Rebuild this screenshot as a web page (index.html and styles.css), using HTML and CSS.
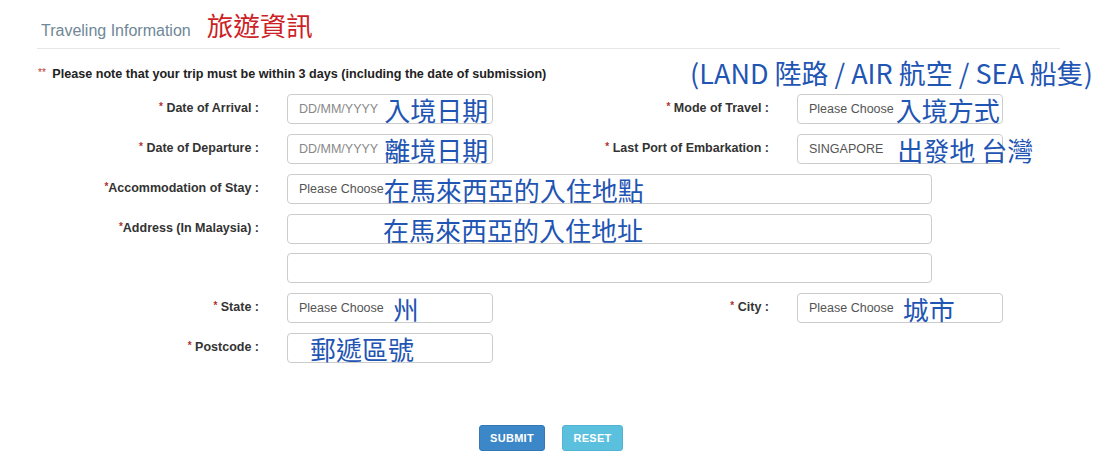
FILE: index.html
```html
<!DOCTYPE html>
<html lang="en">
<head>
<meta charset="utf-8">
<title>Traveling Information</title>
<link rel="stylesheet" href="styles.css">
</head>
<body>
<div class="page">
  <div class="header">
    <span class="title">Traveling Information</span>
    <span class="title-zh">旅遊資訊</span>
  </div>

  <div class="note-row">
    <div class="note"><span class="stars">**</span> Please note that your trip must be within 3 days (including the date of submission)</div>
    <div class="annot-mode">(LAND 陸路 / AIR 航空 / SEA 船隻)</div>
  </div>

  <div class="form">
    <div class="row">
      <div class="field">
        <label class="label"><span class="req">*</span> Date of Arrival :</label>
        <div class="input"><span class="ph">DD/MM/YYYY</span><span class="zh zh-date">入境日期</span></div>
      </div>
      <div class="field">
        <label class="label"><span class="req">*</span> Mode of Travel :</label>
        <div class="input"><span class="val">Please Choose</span><span class="zh zh-mode">入境方式</span></div>
      </div>
    </div>

    <div class="row">
      <div class="field">
        <label class="label"><span class="req">*</span> Date of Departure :</label>
        <div class="input"><span class="ph">DD/MM/YYYY</span><span class="zh zh-date">離境日期</span></div>
      </div>
      <div class="field">
        <label class="label"><span class="req">*</span> Last Port of Embarkation :</label>
        <div class="input"><span class="val">SINGAPORE</span><span class="zh zh-port">出發地 台灣</span></div>
      </div>
    </div>

    <div class="row">
      <div class="field">
        <label class="label"><span class="req">*</span>Accommodation of Stay :</label>
        <div class="input wide"><span class="val">Please Choose</span><span class="zh zh-acc">在馬來西亞的入住地點</span></div>
      </div>
    </div>

    <div class="row">
      <div class="field">
        <label class="label"><span class="req">*</span>Address (In Malaysia) :</label>
        <div class="input wide"><span class="zh zh-addr">在馬來西亞的入住地址</span></div>
      </div>
    </div>

    <div class="row row-tight">
      <div class="field">
        <span class="label"></span>
        <div class="input wide"></div>
      </div>
    </div>

    <div class="row">
      <div class="field">
        <label class="label"><span class="req">*</span> State :</label>
        <div class="input"><span class="val">Please Choose</span><span class="zh zh-state">州</span></div>
      </div>
      <div class="field">
        <label class="label"><span class="req">*</span> City :</label>
        <div class="input"><span class="val">Please Choose</span><span class="zh zh-city">城市</span></div>
      </div>
    </div>

    <div class="row">
      <div class="field">
        <label class="label"><span class="req">*</span> Postcode :</label>
        <div class="input"><span class="zh zh-post">郵遞區號</span></div>
      </div>
    </div>
  </div>

  <div class="actions">
    <button class="btn btn-submit" type="button">SUBMIT</button>
    <button class="btn btn-reset" type="button">RESET</button>
  </div>
</div>
</body>
</html>
```

FILE: styles.css
```css
* { box-sizing: border-box; }

html, body {
  margin: 0;
  padding: 0;
  background: #ffffff;
}

body {
  font-family: "Liberation Sans", Arial, sans-serif;
  color: #333333;
  width: 1102px;
  height: 470px;
  overflow: hidden;
}

.header {
  display: flex;
  align-items: baseline;
  margin-left: 37px;
  width: 1023px;
  height: 49px;
  padding-top: 11px;
  padding-left: 4px;
  border-bottom: 1px solid #e6e6e6;
}

.title {
  font-size: 16px;
  color: #6f8797;
}

.title-zh {
  font-family: "Noto Sans CJK TC", sans-serif;
  font-size: 26.5px;
  line-height: 27px;
  color: #cc1f26;
  margin-left: 16px;
}

.note-row {
  display: flex;
  align-items: center;
  justify-content: space-between;
  height: 45px;
  padding-top: 5px;
  padding-left: 38px;
  padding-right: 9px;
}

.note {
  font-size: 12.6px;
  font-weight: bold;
  color: #222222;
  white-space: nowrap;
}

.stars {
  color: #c0392b;
  font-weight: normal;
  font-size: 10px;
  vertical-align: 2px;
  margin-right: 3px;
}

.annot-mode {
  font-family: "Noto Sans CJK TC", sans-serif;
  font-size: 27px;
  line-height: 30px;
  color: #1f55b3;
  white-space: nowrap;
  position: relative;
  top: -1px;
}

.form {
  display: flex;
  flex-direction: column;
  gap: 10px;
}

.row {
  display: flex;
  height: 30px;
}

.row-tight {
  margin-top: -1px;
}

.field {
  display: flex;
  align-items: center;
  width: 510px;
}

.label {
  width: 259px;
  flex: none;
  text-align: right;
  font-size: 12.5px;
  font-weight: bold;
  color: #333333;
  white-space: nowrap;
  margin-right: 28px;
  position: relative;
  top: -1px;
}

.req {
  color: #b03030;
  font-size: 10px;
  vertical-align: 2px;
}

.input {
  flex: none;
  width: 206px;
  height: 30px;
  border: 1px solid #cccccc;
  border-radius: 4px;
  display: flex;
  align-items: center;
  padding-left: 11px;
  font-size: 12.5px;
  white-space: nowrap;
  overflow: visible;
  background: #ffffff;
}

.input.wide {
  width: 645px;
}

.ph {
  color: #888888;
}

.val {
  color: #555555;
}

.zh {
  font-family: "Noto Sans CJK TC", sans-serif;
  font-size: 26px;
  line-height: 26px;
  color: #1f55b3;
  position: relative;
  top: 1px;
}

.zh-date { margin-left: 6px; }
.zh-mode { margin-left: 2px; }
.zh-port { margin-left: 14px; }
.zh-acc { margin-left: 0px; }
.zh-addr { margin-left: 84px; }
.zh-state { margin-left: 9px; }
.zh-city { margin-left: 9px; }
.zh-post { margin-left: 11px; }

.actions {
  display: flex;
  justify-content: center;
  gap: 17px;
  margin-top: 62px;
}

.btn {
  height: 26px;
  border-radius: 3px;
  font-family: "Liberation Sans", Arial, sans-serif;
  font-size: 11px;
  font-weight: bold;
  color: #ffffff;
  letter-spacing: 0.3px;
  padding: 0;
  cursor: pointer;
}

.btn-submit {
  width: 66px;
  background: #3c87c7;
  border: 1px solid #3479b6;
}

.btn-reset {
  width: 61px;
  background: #5bc0de;
  border: 1px solid #52b4d2;
}
```
